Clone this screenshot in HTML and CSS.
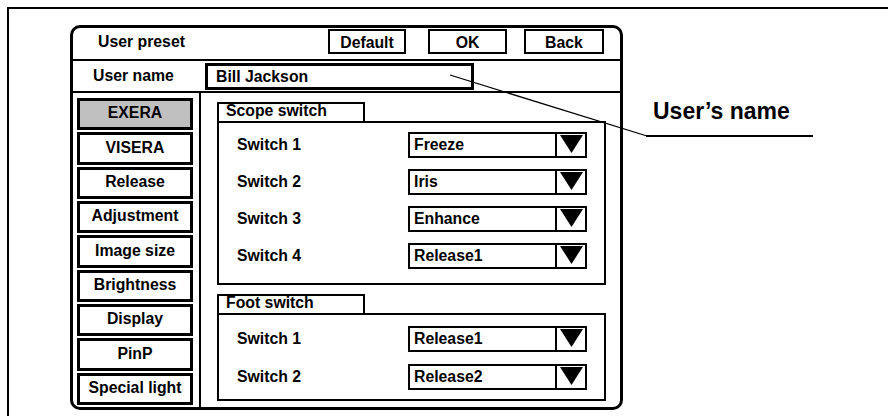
FILE: index.html
```html
<!DOCTYPE html>
<html lang="en">
<head>
<meta charset="utf-8">
<title>User preset</title>
<link rel="stylesheet" href="styles.css">
</head>
<body>
<div class="sheet">
  <div class="dialog">
    <div class="hdr">
      <div class="title">User preset</div>
      <div class="hbtns">
        <div class="btn btn-default">Default</div>
        <div class="btn btn-ok">OK</div>
        <div class="btn btn-back">Back</div>
      </div>
    </div>
    <div class="urow">
      <div class="ulabel">User name</div>
      <div class="uinput">Bill Jackson</div>
    </div>
    <div class="main">
      <div class="side">
        <div class="sbtn active">EXERA</div>
        <div class="sbtn">VISERA</div>
        <div class="sbtn">Release</div>
        <div class="sbtn">Adjustment</div>
        <div class="sbtn">Image size</div>
        <div class="sbtn">Brightness</div>
        <div class="sbtn">Display</div>
        <div class="sbtn">PinP</div>
        <div class="sbtn">Special light</div>
      </div>
      <div class="content">
        <div class="panel">
          <div class="tab">Scope switch</div>
          <div class="box box-scope">
            <div class="row"><div class="rlabel">Switch 1</div><div class="dd"><div class="ddval">Freeze</div><div class="ddarrow"><svg width="28" height="22" viewBox="0 0 28 22"><polygon points="3,1 26,1 14.5,19" fill="#000"/></svg></div></div></div>
            <div class="row"><div class="rlabel">Switch 2</div><div class="dd"><div class="ddval">Iris</div><div class="ddarrow"><svg width="28" height="22" viewBox="0 0 28 22"><polygon points="3,1 26,1 14.5,19" fill="#000"/></svg></div></div></div>
            <div class="row"><div class="rlabel">Switch 3</div><div class="dd"><div class="ddval">Enhance</div><div class="ddarrow"><svg width="28" height="22" viewBox="0 0 28 22"><polygon points="3,1 26,1 14.5,19" fill="#000"/></svg></div></div></div>
            <div class="row"><div class="rlabel">Switch 4</div><div class="dd"><div class="ddval">Release1</div><div class="ddarrow"><svg width="28" height="22" viewBox="0 0 28 22"><polygon points="3,1 26,1 14.5,19" fill="#000"/></svg></div></div></div>
          </div>
        </div>
        <div class="panel panel-foot">
          <div class="tab">Foot switch</div>
          <div class="box box-foot">
            <div class="row"><div class="rlabel">Switch 1</div><div class="dd"><div class="ddval">Release1</div><div class="ddarrow"><svg width="28" height="22" viewBox="0 0 28 22"><polygon points="3,1 26,1 14.5,19" fill="#000"/></svg></div></div></div>
            <div class="row"><div class="rlabel">Switch 2</div><div class="dd"><div class="ddval">Release2</div><div class="ddarrow"><svg width="28" height="22" viewBox="0 0 28 22"><polygon points="3,1 26,1 14.5,19" fill="#000"/></svg></div></div></div>
          </div>
        </div>
      </div>
    </div>
  </div>
</div>
<svg class="callout" width="888" height="416" viewBox="0 0 888 416">
  <line x1="450" y1="75" x2="647" y2="136" stroke="#000" stroke-width="1.3"/>
  <line x1="646" y1="136" x2="813" y2="136" stroke="#000" stroke-width="2"/>
</svg>
<div class="callout-text">User’s name</div>
</body>
</html>
```
FILE: styles.css
```css
html, body {
  margin: 0;
  padding: 0;
  width: 888px;
  height: 416px;
  overflow: hidden;
  background: #fff;
}
body {
  position: relative;
  font-family: "Liberation Sans", Arial, sans-serif;
  font-weight: bold;
  font-size: 15.8px;
  color: #000;
}
.sheet {
  margin: 7px 0 0 7px;
  border-top: 2px solid #000;
  border-left: 2px solid #000;
  padding: 16px 0 0 61px;
  height: 391px;
}
.dialog {
  width: 547px;
  border: 3px solid #000;
  border-radius: 10px;
}
.hdr {
  display: flex;
  height: 31px;
  border-bottom: 2px solid #000;
  padding: 0 16px 0 25px;
}
.title {
  line-height: 27px;
}
.hbtns {
  display: flex;
  margin-left: auto;
  margin-top: 1px;
}
.btn {
  box-sizing: border-box;
  height: 25px;
  border: 2px solid #000;
  padding-top: 2px;
  line-height: 19px;
  text-align: center;
}
.btn-default { width: 78px; }
.btn-ok { width: 79px; margin-left: 22px; }
.btn-back { width: 80px; margin-left: 17px; }
.urow {
  display: flex;
  height: 30px;
  border-bottom: 2px solid #000;
  padding-left: 20px;
}
.ulabel {
  width: 112px;
  line-height: 30px;
}
.uinput {
  box-sizing: border-box;
  width: 269px;
  height: 27px;
  margin-top: 2px;
  border: 3px solid #000;
  padding-left: 8px;
  line-height: 21px;
}
.main {
  display: flex;
  height: 314px;
}
.side {
  box-sizing: border-box;
  width: 128px;
  border-right: 2px solid #000;
  padding: 5px 6px 2px 4px;
  display: flex;
  flex-direction: column;
  gap: 2px;
}
.sbtn {
  flex: 1;
  box-sizing: border-box;
  border: 3px solid #000;
  display: flex;
  align-items: center;
  justify-content: center;
  padding-bottom: 2px;
  line-height: 1;
}
.sbtn.active {
  background: #c0c0c0;
}
.content {
  flex: 1;
  padding: 9px 14px 6px 16px;
}
.panel-foot {
  margin-top: 9px;
}
.tab {
  box-sizing: border-box;
  width: 148px;
  height: 19px;
  border: 2px solid #000;
  border-bottom: none;
  padding-left: 7px;
  line-height: 14px;
}
.box {
  box-sizing: border-box;
  border: 2px solid #000;
  display: flex;
  flex-direction: column;
}
.box-scope {
  height: 164px;
  padding-top: 9px;
  gap: 11px;
}
.box-foot {
  height: 88px;
  padding-top: 11px;
  gap: 12px;
}
.row {
  display: flex;
  align-items: center;
  height: 26px;
  padding-left: 18px;
}
.rlabel {
  width: 171px;
  line-height: 26px;
}
.dd {
  box-sizing: border-box;
  width: 179px;
  height: 26px;
  border: 2px solid #000;
  display: flex;
}
.ddval {
  flex: 1;
  padding-left: 4px;
  line-height: 22px;
}
.ddarrow {
  width: 28px;
  height: 22px;
  border-left: 2px solid #000;
}
.ddarrow svg {
  display: block;
}
.callout {
  position: absolute;
  left: 0;
  top: 0;
  pointer-events: none;
}
.callout-text {
  position: absolute;
  left: 653px;
  top: 100px;
  font-size: 23px;
  line-height: 23px;
}
```
